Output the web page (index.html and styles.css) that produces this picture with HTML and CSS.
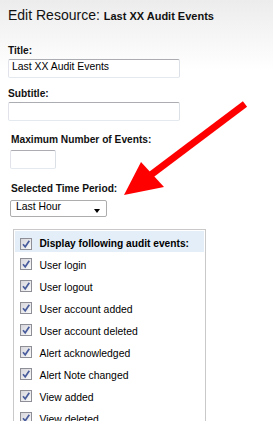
FILE: index.html
```html
<!DOCTYPE html>
<html lang="en">
<head>
    <meta charset="UTF-8">
    <meta name="viewport" content="width=device-width, initial-scale=1.0">
    <title>Edit Resource</title>
    <link rel="stylesheet" href="styles.css">
</head>
<body>
    <div class="page">
        <h1 class="page-title">Edit Resource: <span class="res-name">Last XX Audit Events</span></h1>

        <form class="edit-form">
            <div class="field first">
                <label>Title:</label>
                <input class="text-input wide" type="text" value="Last XX Audit Events">
            </div>
            <div class="field">
                <label>Subtitle:</label>
                <input class="text-input wide" type="text">
            </div>
            <div class="field indent max-events">
                <label>Maximum Number of Events:</label>
                <input class="text-input short" type="text">
            </div>
            <div class="field indent period">
                <label>Selected Time Period:</label>
                <div class="select">Last Hour <span class="caret"></span></div>
            </div>

            <div class="events">
                <div class="row head"><span class="check"></span><span class="row-text">Display following audit events:</span></div>
                <div class="row"><span class="check"></span><span class="row-text">User login</span></div>
                <div class="row"><span class="check"></span><span class="row-text">User logout</span></div>
                <div class="row"><span class="check"></span><span class="row-text">User account added</span></div>
                <div class="row"><span class="check"></span><span class="row-text">User account deleted</span></div>
                <div class="row"><span class="check"></span><span class="row-text">Alert acknowledged</span></div>
                <div class="row"><span class="check"></span><span class="row-text">Alert Note changed</span></div>
                <div class="row"><span class="check"></span><span class="row-text">View added</span></div>
                <div class="row"><span class="check"></span><span class="row-text">View deleted</span></div>
            </div>
        </form>

        <!-- red annotation arrow drawn on top of the form -->
        <svg class="arrow" viewBox="0 0 273 421" width="273" height="421">
            <line x1="245" y1="104" x2="148" y2="177" stroke="#ff0000" stroke-width="7"/>
            <polygon points="124,195 141,162 164,187" fill="#ff0000"/>
        </svg>
    </div>
</body>
</html>
```

FILE: styles.css
```css
html {
    overflow: hidden;
}
body {
    margin: 0;
    font-family: "Liberation Sans", Arial, sans-serif;
    color: #000;
    background: #fff linear-gradient(#ececec, #ffffff 70px) no-repeat;
}
.page {
    position: relative;
    padding: 7px 0 0 8px;
    height: 414px;
}
.page-title {
    margin: 0;
    font-size: 14px;
    font-weight: normal;
    line-height: 17px;
    color: #111;
}
.res-name {
    font-size: 11px;
    font-weight: bold;
}
.field {
    margin-top: 10px;
}
.field.first {
    margin-top: 19.5px;
}
.field label {
    display: block;
    font-size: 10.2px;
    font-weight: bold;
    line-height: 12px;
    color: #111;
}
.text-input {
    display: block;
    box-sizing: border-box;
    height: 19px;
    margin: 2px 0 0 0;
    padding: 0 3px 4px;
    border: 1px solid;
    border-color: #abadb3 #dbdfe6 #e3e9ef #e2e3ea;
    border-radius: 2px;
    background: #fff;
    font-family: "Liberation Sans", Arial, sans-serif;
    font-size: 10.4px;
    color: #000;
    outline: none;
}
.wide {
    width: 172px;
}
.short {
    width: 46px;
    margin-top: 4px;
}
.indent {
    padding-left: 2px;
}
.indent label {
    padding-left: 1px;
}
.max-events {
    margin-top: 13.7px;
}
.period {
    margin-top: 14.2px;
}
.select {
    box-sizing: border-box;
    width: 97px;
    height: 17px;
    margin-top: 4.5px;
    padding: 0 6px 0 5px;
    border: 1px solid #adadad;
    border-radius: 2px;
    background: #fff;
    display: flex;
    justify-content: space-between;
    align-items: flex-start;
    font-size: 10.4px;
    line-height: 12px;
}
.caret {
    width: 0;
    height: 0;
    margin-top: 8px;
    border-left: 3px solid transparent;
    border-right: 3px solid transparent;
    border-top: 4px solid #000;
}
.events {
    box-sizing: border-box;
    width: 193px;
    margin: 12.3px 0 0 5px;
    padding: 1px 1px 30px;
    border: 1px solid #c9c9c9;
}
.row {
    display: flex;
    align-items: flex-start;
    height: 22px;
    box-sizing: border-box;
    padding: 6px 0 0 5px;
    font-size: 10.4px;
    line-height: 12px;
}
.row .row-text {
    margin-top: 2px;
}
.row.head {
    height: 21px;
    padding-top: 7px;
    background: #e3eef9;
    font-size: 10.2px;
    font-weight: bold;
}
.row.head .row-text {
    margin-top: 0;
}
.check {
    flex: none;
    box-sizing: border-box;
    width: 12px;
    height: 12px;
    margin-right: 7.5px;
    border: 1px solid #8e8f96;
    background:
        url("data:image/svg+xml;utf8,<svg xmlns='http://www.w3.org/2000/svg' viewBox='0 0 10 10'><path d='M2 5.2 L4.2 7.8 L8.3 1.8' fill='none' stroke='%234a5d9c' stroke-width='1.7'/></svg>") center / 10px 10px no-repeat,
        linear-gradient(135deg, #d6d6dc, #fafafa);
}
.arrow {
    position: absolute;
    top: 0;
    left: 0;
    pointer-events: none;
}
```
